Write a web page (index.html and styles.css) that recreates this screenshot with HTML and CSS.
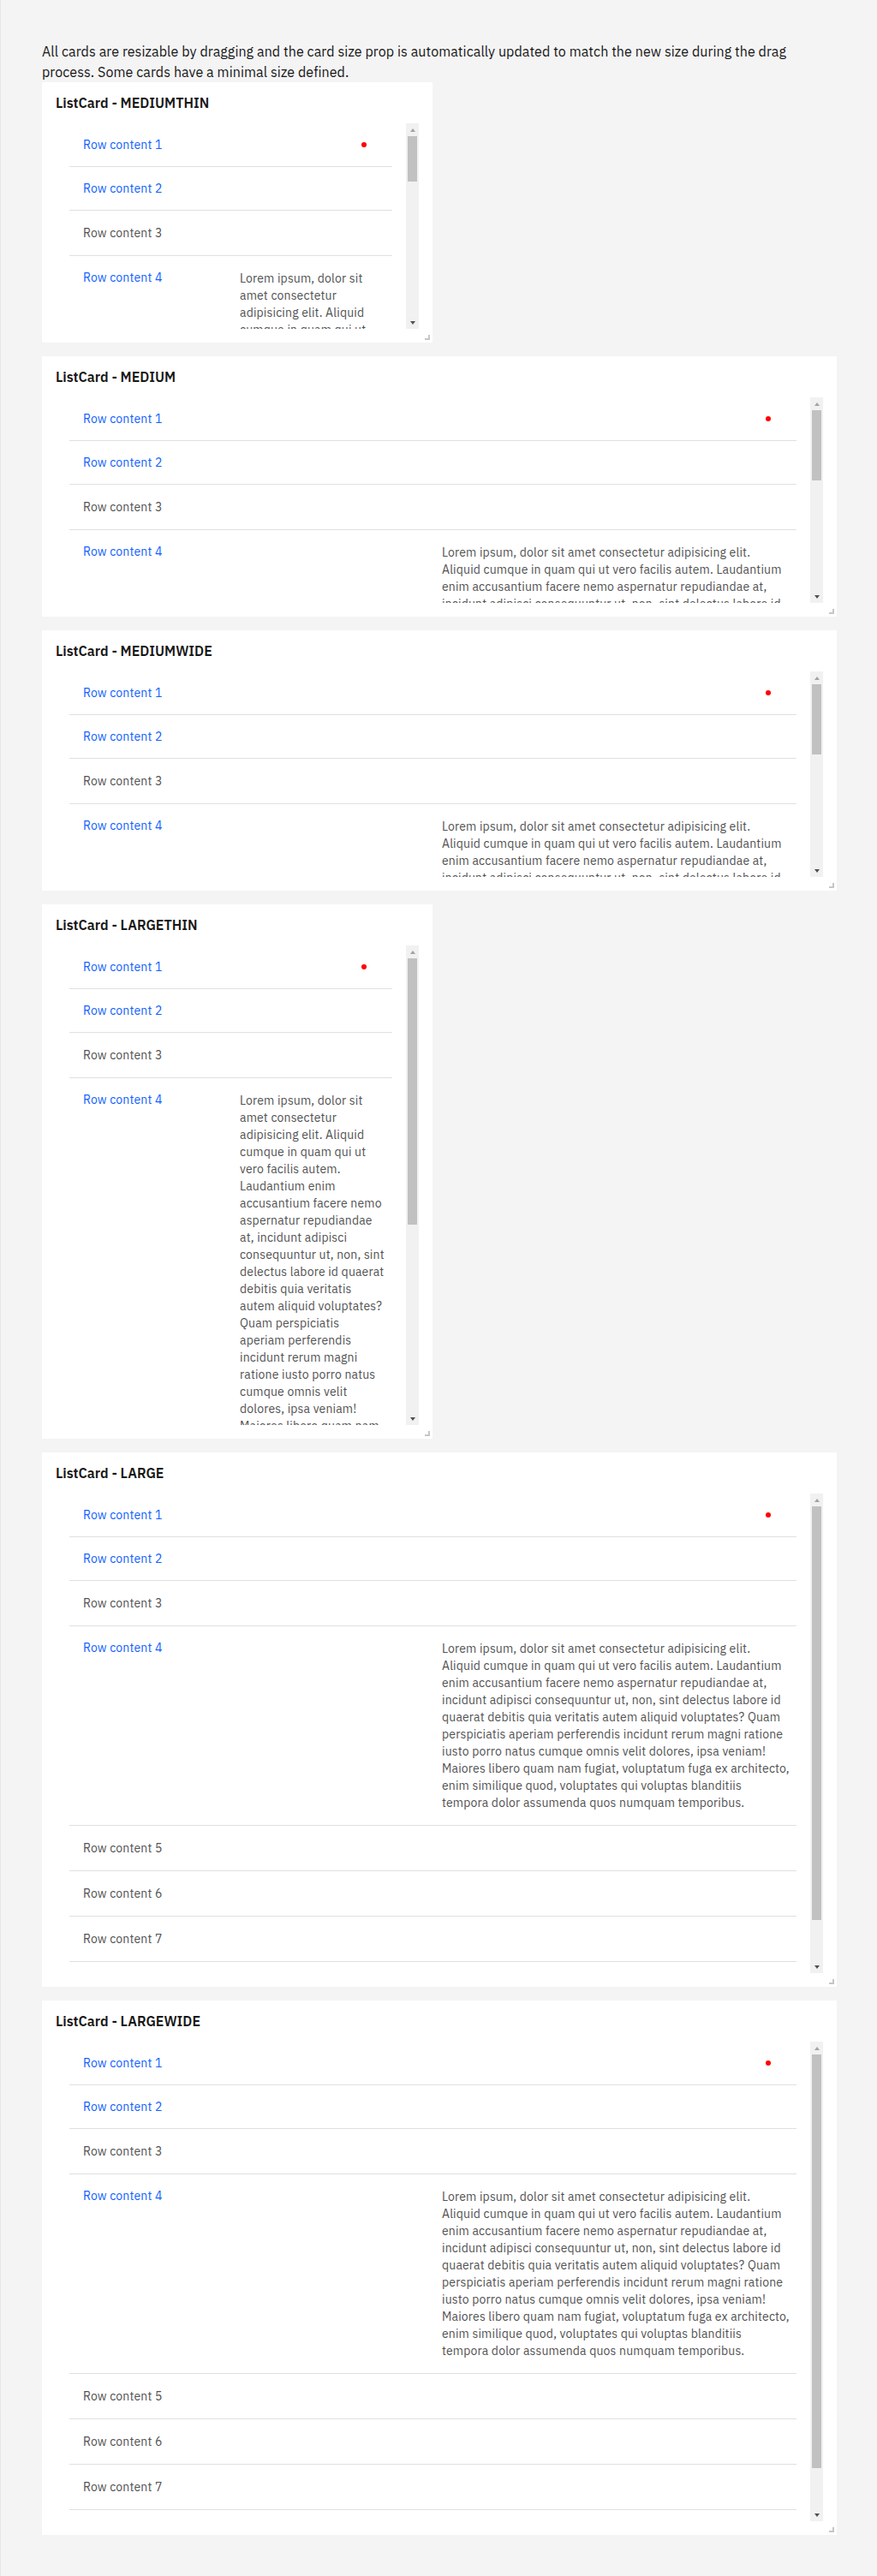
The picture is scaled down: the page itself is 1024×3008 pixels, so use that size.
FILE: index.html
```html
<!DOCTYPE html>
<html lang="en">
<head>
<meta charset="utf-8">
<title>ListCard sizes</title>
<link rel="stylesheet" href="styles.css">
</head>
<body>
<div class="page">
  <p class="intro">All cards are resizable by dragging and the card size prop is automatically updated to match the new size during the drag process. Some cards have a minimal size defined.</p>
  <div class="cards">

    <section class="card card--thin card--medium">
      <header class="card-title">ListCard - MEDIUMTHIN</header>
      <div class="card-body">
        <div class="viewport">
          <ul class="list">
            <li class="row row--link"><a class="row-link">Row content 1</a><span class="row-extra"><span class="dot"></span></span></li>
            <li class="row row--link"><a class="row-link">Row content 2</a></li>
            <li class="row row--text"><span class="row-label">Row content 3</span></li>
            <li class="row row--link"><a class="row-link">Row content 4</a><span class="row-desc">Lorem ipsum, dolor sit amet consectetur adipisicing elit. Aliquid cumque in quam qui ut vero facilis autem. Laudantium enim accusantium facere nemo aspernatur repudiandae at, incidunt adipisci consequuntur ut, non, sint delectus labore id quaerat debitis quia veritatis autem aliquid voluptates? Quam perspiciatis aperiam perferendis incidunt rerum magni ratione iusto porro natus cumque omnis velit dolores, ipsa veniam! Maiores libero quam nam fugiat, voluptatum fuga ex architecto, enim similique quod, voluptates qui voluptas blanditiis tempora dolor assumenda quos numquam temporibus.</span></li>
            <li class="row row--text"><span class="row-label">Row content 5</span></li>
            <li class="row row--text"><span class="row-label">Row content 6</span></li>
            <li class="row row--text"><span class="row-label">Row content 7</span></li>
            <li class="row row--text"><span class="row-label">Row content 8</span></li>
          </ul>
        </div>
        <div class="scrollbar"><span class="sb-btn sb-up"></span><span class="sb-track"><span class="sb-thumb" style="height:53px"></span></span><span class="sb-btn sb-down"></span></div>
      </div>
      <span class="resize-handle"></span>
    </section>

    <section class="card card--wide card--medium">
      <header class="card-title">ListCard - MEDIUM</header>
      <div class="card-body">
        <div class="viewport">
          <ul class="list">
            <li class="row row--link"><a class="row-link">Row content 1</a><span class="row-extra"><span class="dot"></span></span></li>
            <li class="row row--link"><a class="row-link">Row content 2</a></li>
            <li class="row row--text"><span class="row-label">Row content 3</span></li>
            <li class="row row--link"><a class="row-link">Row content 4</a><span class="row-desc">Lorem ipsum, dolor sit amet consectetur adipisicing elit. Aliquid cumque in quam qui ut vero facilis autem. Laudantium enim accusantium facere nemo aspernatur repudiandae at, incidunt adipisci consequuntur ut, non, sint delectus labore id quaerat debitis quia veritatis autem aliquid voluptates? Quam perspiciatis aperiam perferendis incidunt rerum magni ratione iusto porro natus cumque omnis velit dolores, ipsa veniam! Maiores libero quam nam fugiat, voluptatum fuga ex architecto, enim similique quod, voluptates qui voluptas blanditiis tempora dolor assumenda quos numquam temporibus.</span></li>
            <li class="row row--text"><span class="row-label">Row content 5</span></li>
            <li class="row row--text"><span class="row-label">Row content 6</span></li>
            <li class="row row--text"><span class="row-label">Row content 7</span></li>
            <li class="row row--text"><span class="row-label">Row content 8</span></li>
          </ul>
        </div>
        <div class="scrollbar"><span class="sb-btn sb-up"></span><span class="sb-track"><span class="sb-thumb" style="height:82px"></span></span><span class="sb-btn sb-down"></span></div>
      </div>
      <span class="resize-handle"></span>
    </section>

    <section class="card card--wide card--medium">
      <header class="card-title">ListCard - MEDIUMWIDE</header>
      <div class="card-body">
        <div class="viewport">
          <ul class="list">
            <li class="row row--link"><a class="row-link">Row content 1</a><span class="row-extra"><span class="dot"></span></span></li>
            <li class="row row--link"><a class="row-link">Row content 2</a></li>
            <li class="row row--text"><span class="row-label">Row content 3</span></li>
            <li class="row row--link"><a class="row-link">Row content 4</a><span class="row-desc">Lorem ipsum, dolor sit amet consectetur adipisicing elit. Aliquid cumque in quam qui ut vero facilis autem. Laudantium enim accusantium facere nemo aspernatur repudiandae at, incidunt adipisci consequuntur ut, non, sint delectus labore id quaerat debitis quia veritatis autem aliquid voluptates? Quam perspiciatis aperiam perferendis incidunt rerum magni ratione iusto porro natus cumque omnis velit dolores, ipsa veniam! Maiores libero quam nam fugiat, voluptatum fuga ex architecto, enim similique quod, voluptates qui voluptas blanditiis tempora dolor assumenda quos numquam temporibus.</span></li>
            <li class="row row--text"><span class="row-label">Row content 5</span></li>
            <li class="row row--text"><span class="row-label">Row content 6</span></li>
            <li class="row row--text"><span class="row-label">Row content 7</span></li>
            <li class="row row--text"><span class="row-label">Row content 8</span></li>
          </ul>
        </div>
        <div class="scrollbar"><span class="sb-btn sb-up"></span><span class="sb-track"><span class="sb-thumb" style="height:82px"></span></span><span class="sb-btn sb-down"></span></div>
      </div>
      <span class="resize-handle"></span>
    </section>

    <section class="card card--thin card--large">
      <header class="card-title">ListCard - LARGETHIN</header>
      <div class="card-body">
        <div class="viewport">
          <ul class="list">
            <li class="row row--link"><a class="row-link">Row content 1</a><span class="row-extra"><span class="dot"></span></span></li>
            <li class="row row--link"><a class="row-link">Row content 2</a></li>
            <li class="row row--text"><span class="row-label">Row content 3</span></li>
            <li class="row row--link"><a class="row-link">Row content 4</a><span class="row-desc">Lorem ipsum, dolor sit amet consectetur adipisicing elit. Aliquid cumque in quam qui ut vero facilis autem. Laudantium enim accusantium facere nemo aspernatur repudiandae at, incidunt adipisci consequuntur ut, non, sint delectus labore id quaerat debitis quia veritatis autem aliquid voluptates? Quam perspiciatis aperiam perferendis incidunt rerum magni ratione iusto porro natus cumque omnis velit dolores, ipsa veniam! Maiores libero quam nam fugiat, voluptatum fuga ex architecto, enim similique quod, voluptates qui voluptas blanditiis tempora dolor assumenda quos numquam temporibus.</span></li>
            <li class="row row--text"><span class="row-label">Row content 5</span></li>
            <li class="row row--text"><span class="row-label">Row content 6</span></li>
            <li class="row row--text"><span class="row-label">Row content 7</span></li>
            <li class="row row--text"><span class="row-label">Row content 8</span></li>
          </ul>
        </div>
        <div class="scrollbar"><span class="sb-btn sb-up"></span><span class="sb-track"><span class="sb-thumb" style="height:311px"></span></span><span class="sb-btn sb-down"></span></div>
      </div>
      <span class="resize-handle"></span>
    </section>

    <section class="card card--wide card--large">
      <header class="card-title">ListCard - LARGE</header>
      <div class="card-body">
        <div class="viewport">
          <ul class="list">
            <li class="row row--link"><a class="row-link">Row content 1</a><span class="row-extra"><span class="dot"></span></span></li>
            <li class="row row--link"><a class="row-link">Row content 2</a></li>
            <li class="row row--text"><span class="row-label">Row content 3</span></li>
            <li class="row row--link"><a class="row-link">Row content 4</a><span class="row-desc">Lorem ipsum, dolor sit amet consectetur adipisicing elit. Aliquid cumque in quam qui ut vero facilis autem. Laudantium enim accusantium facere nemo aspernatur repudiandae at, incidunt adipisci consequuntur ut, non, sint delectus labore id quaerat debitis quia veritatis autem aliquid voluptates? Quam perspiciatis aperiam perferendis incidunt rerum magni ratione iusto porro natus cumque omnis velit dolores, ipsa veniam! Maiores libero quam nam fugiat, voluptatum fuga ex architecto, enim similique quod, voluptates qui voluptas blanditiis tempora dolor assumenda quos numquam temporibus.</span></li>
            <li class="row row--text"><span class="row-label">Row content 5</span></li>
            <li class="row row--text"><span class="row-label">Row content 6</span></li>
            <li class="row row--text"><span class="row-label">Row content 7</span></li>
            <li class="row row--text"><span class="row-label">Row content 8</span></li>
          </ul>
        </div>
        <div class="scrollbar"><span class="sb-btn sb-up"></span><span class="sb-track"><span class="sb-thumb" style="height:483px"></span></span><span class="sb-btn sb-down"></span></div>
      </div>
      <span class="resize-handle"></span>
    </section>

    <section class="card card--wide card--large">
      <header class="card-title">ListCard - LARGEWIDE</header>
      <div class="card-body">
        <div class="viewport">
          <ul class="list">
            <li class="row row--link"><a class="row-link">Row content 1</a><span class="row-extra"><span class="dot"></span></span></li>
            <li class="row row--link"><a class="row-link">Row content 2</a></li>
            <li class="row row--text"><span class="row-label">Row content 3</span></li>
            <li class="row row--link"><a class="row-link">Row content 4</a><span class="row-desc">Lorem ipsum, dolor sit amet consectetur adipisicing elit. Aliquid cumque in quam qui ut vero facilis autem. Laudantium enim accusantium facere nemo aspernatur repudiandae at, incidunt adipisci consequuntur ut, non, sint delectus labore id quaerat debitis quia veritatis autem aliquid voluptates? Quam perspiciatis aperiam perferendis incidunt rerum magni ratione iusto porro natus cumque omnis velit dolores, ipsa veniam! Maiores libero quam nam fugiat, voluptatum fuga ex architecto, enim similique quod, voluptates qui voluptas blanditiis tempora dolor assumenda quos numquam temporibus.</span></li>
            <li class="row row--text"><span class="row-label">Row content 5</span></li>
            <li class="row row--text"><span class="row-label">Row content 6</span></li>
            <li class="row row--text"><span class="row-label">Row content 7</span></li>
            <li class="row row--text"><span class="row-label">Row content 8</span></li>
          </ul>
        </div>
        <div class="scrollbar"><span class="sb-btn sb-up"></span><span class="sb-track"><span class="sb-thumb" style="height:483px"></span></span><span class="sb-btn sb-down"></span></div>
      </div>
      <span class="resize-handle"></span>
    </section>

  </div>
</div>
</body>
</html>
```

FILE: styles.css
```css
* {
  box-sizing: border-box;
}

html,
body {
  margin: 0;
  padding: 0;
  background: #f4f4f4;
}

body {
  font-family: "IBM Plex Sans", "Liberation Sans", Arial, sans-serif;
  color: #161616;
}

.page {
  border-left: 1px solid #e6e6e6;
  padding: 48px;
}

.intro {
  margin: 0;
  font-size: 16px;
  line-height: 24px;
  letter-spacing: 0.08px;
  color: #161616;
}

.cards {
  display: flex;
  flex-direction: column;
  align-items: flex-start;
  gap: 16px;
}

.card {
  position: relative;
  display: flex;
  flex-direction: column;
  background: #ffffff;
}

.card--thin {
  width: 456px;
}

.card--wide {
  width: 928px;
}

.card--medium {
  height: 304px;
}

.card--large {
  height: 624px;
}

.card-title {
  flex: 0 0 48px;
  display: flex;
  align-items: center;
  padding: 0 16px;
  font-size: 16px;
  font-weight: 600;
  line-height: 20px;
  color: #161616;
}

.card-body {
  flex: 1 1 auto;
  min-height: 0;
  display: flex;
  margin: 0 16px 16px 16px;
}

.viewport {
  flex: 1 1 auto;
  min-width: 0;
  overflow: hidden;
}

.list {
  list-style: none;
  margin: 0;
  padding: 0 16px 14px 16px;
}

.row {
  display: grid;
  grid-template-columns: 1fr 1fr;
  column-gap: 12px;
  padding: 16px 7px 16px 16px;
  border-bottom: 1px solid #e0e0e0;
  font-size: 14px;
  letter-spacing: 0.16px;
}

.row--link {
  line-height: 18px;
}

.row--text {
  line-height: 20px;
}

.row-link {
  color: #0f62fe;
  text-decoration: none;
  align-self: start;
}

.row-label {
  color: #525252;
}

.row-desc {
  color: #525252;
  line-height: 20px;
}

.row-extra {
  display: flex;
  justify-content: flex-end;
  align-items: center;
}

.dot {
  width: 6px;
  height: 6px;
  margin-right: 23px;
  border-radius: 50%;
  background: #ff0000;
}

.scrollbar {
  flex: 0 0 15px;
  display: flex;
  flex-direction: column;
  background: #f1f1f1;
}

.sb-btn {
  flex: 0 0 15px;
  display: flex;
  align-items: center;
  justify-content: center;
}

.sb-up::before {
  content: "";
  border-left: 3.5px solid transparent;
  border-right: 3.5px solid transparent;
  border-bottom: 4px solid #a3a3a3;
}

.sb-down::before {
  content: "";
  border-left: 3.5px solid transparent;
  border-right: 3.5px solid transparent;
  border-top: 4px solid #505050;
}

.sb-track {
  flex: 1 1 auto;
  padding: 0 2px;
}

.sb-thumb {
  display: block;
  background: #c1c1c1;
}

.resize-handle {
  position: absolute;
  right: 3px;
  bottom: 3px;
  width: 6px;
  height: 6px;
  border-right: 2px solid #c6c6c6;
  border-bottom: 2px solid #c6c6c6;
}
```
